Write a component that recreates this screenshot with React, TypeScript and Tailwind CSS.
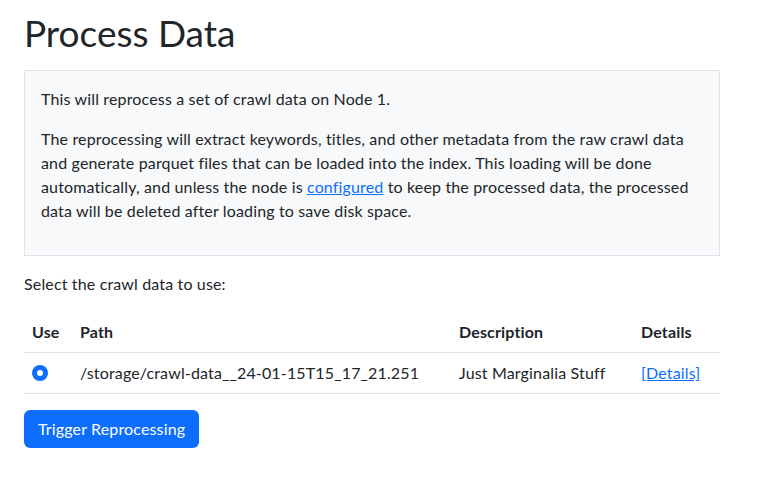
export default function App() {
  return (
    <div className="min-h-screen bg-white px-6 text-[16px] leading-6 tracking-[0.15px] text-[#212529] [font-family:Lato,'Liberation_Sans',sans-serif]">
      <h1 className="pt-[10px] pb-[14px] text-[37px] leading-[46px] font-normal tracking-normal">Process Data</h1>
      <div className="w-[696px] border border-[#dee2e6] bg-[#f8f9fa] p-4 pb-0">
        <p className="mb-4">This will reprocess a set of crawl data on Node 1.</p>
        <p className="mb-8">
          The reprocessing will extract keywords, titles, and other metadata from the raw crawl data
          and generate parquet files that can be loaded into the index. This loading will be done
          automatically, and unless the node is{" "}
          <a href="#" className="text-[#0d6efd] underline">
            configured
          </a>{" "}
          to keep the processed data, the processed data will be deleted after loading to save disk
          space.
        </p>
      </div>
      <p className="mt-4 mb-4">Select the crawl data to use:</p>
      <table className="mb-4 w-[696px] border-collapse text-left">
        <thead>
          <tr className="border-b border-[#dee2e6]">
            <th className="w-[48px] px-2 py-2 font-bold">Use</th>
            <th className="w-[379px] px-2 py-2 font-bold">Path</th>
            <th className="w-[182px] px-2 py-2 font-bold">Description</th>
            <th className="px-2 py-2 font-bold">Details</th>
          </tr>
        </thead>
        <tbody>
          <tr className="border-b border-[#dee2e6]">
            <td className="px-2 py-2">
              <span className="flex h-4 w-4 items-center justify-center rounded-full bg-[#0d6efd]">
                <span className="h-[6px] w-[6px] rounded-full bg-white" />
              </span>
            </td>
            <td className="px-2 py-2">/storage/crawl-data__24-01-15T15_17_21.251</td>
            <td className="px-2 py-2">Just Marginalia Stuff</td>
            <td className="px-2 py-2">
              <a href="#" className="text-[#0d6efd] underline">
                [Details]
              </a>
            </td>
          </tr>
        </tbody>
      </table>
      <button className="rounded-md bg-[#0d6efd] px-[14px] py-[7px] leading-6 text-white">Trigger Reprocessing</button>
    </div>
  );
}
